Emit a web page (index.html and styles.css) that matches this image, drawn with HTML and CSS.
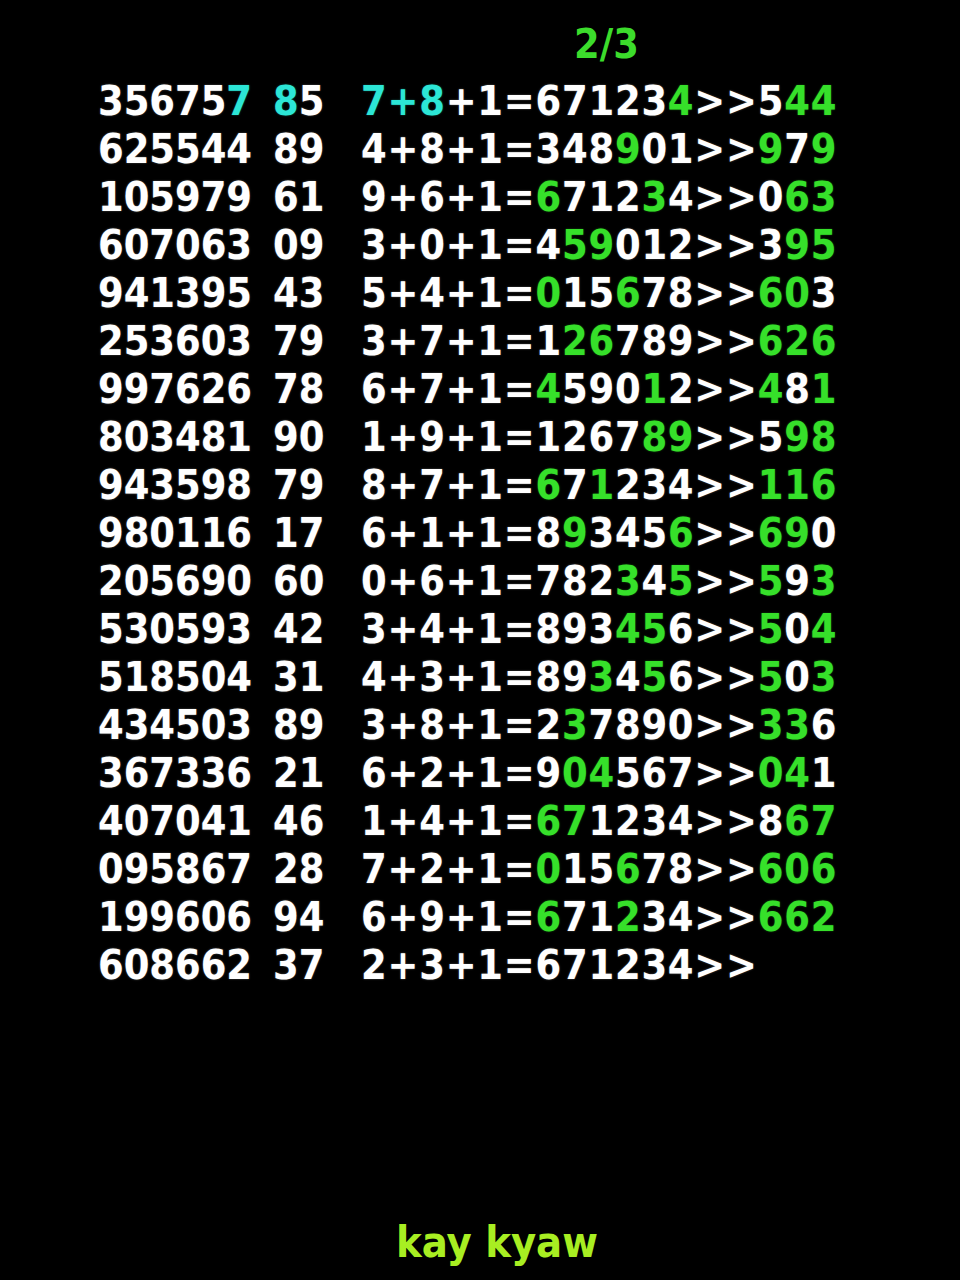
FILE: index.html
```html
<!DOCTYPE html>
<html lang="en">
<head>
    <meta charset="UTF-8">
    <meta name="viewport" content="width=device-width, initial-scale=1.0">
    <title>2/3</title>
    <link rel="stylesheet" href="styles.css">
</head>
<body>
    <div class="sheet">
        <h1 class="title">2/3</h1>

        <div class="rows">
            <div class="row"><span>35675<b class="c">7</b></span><span><b class="c">8</b>5</span><span class="eq"><b class="c">7+8</b>+1=67123<b>4</b>&gt;&gt;5<b>44</b></span></div>
            <div class="row"><span>625544</span><span>89</span><span class="eq">4+8+1=348<b>9</b>01&gt;&gt;<b>9</b>7<b>9</b></span></div>
            <div class="row"><span>105979</span><span>61</span><span class="eq">9+6+1=<b>6</b>712<b>3</b>4&gt;&gt;0<b>63</b></span></div>
            <div class="row"><span>607063</span><span>09</span><span class="eq">3+0+1=4<b>59</b>012&gt;&gt;3<b>95</b></span></div>
            <div class="row"><span>941395</span><span>43</span><span class="eq">5+4+1=<b>0</b>15<b>6</b>78&gt;&gt;<b>60</b>3</span></div>
            <div class="row"><span>253603</span><span>79</span><span class="eq">3+7+1=1<b>26</b>789&gt;&gt;<b>626</b></span></div>
            <div class="row"><span>997626</span><span>78</span><span class="eq">6+7+1=<b>4</b>590<b>1</b>2&gt;&gt;<b>4</b>8<b>1</b></span></div>
            <div class="row"><span>803481</span><span>90</span><span class="eq">1+9+1=1267<b>89</b>&gt;&gt;5<b>98</b></span></div>
            <div class="row"><span>943598</span><span>79</span><span class="eq">8+7+1=<b>6</b>7<b>1</b>234&gt;&gt;<b>116</b></span></div>
            <div class="row"><span>980116</span><span>17</span><span class="eq">6+1+1=8<b>9</b>345<b>6</b>&gt;&gt;<b>69</b>0</span></div>
            <div class="row"><span>205690</span><span>60</span><span class="eq">0+6+1=782<b>3</b>4<b>5</b>&gt;&gt;<b>5</b>9<b>3</b></span></div>
            <div class="row"><span>530593</span><span>42</span><span class="eq">3+4+1=893<b>45</b>6&gt;&gt;<b>5</b>0<b>4</b></span></div>
            <div class="row"><span>518504</span><span>31</span><span class="eq">4+3+1=89<b>3</b>4<b>5</b>6&gt;&gt;<b>5</b>0<b>3</b></span></div>
            <div class="row"><span>434503</span><span>89</span><span class="eq">3+8+1=2<b>3</b>7890&gt;&gt;<b>33</b>6</span></div>
            <div class="row"><span>367336</span><span>21</span><span class="eq">6+2+1=9<b>04</b>567&gt;&gt;<b>04</b>1</span></div>
            <div class="row"><span>407041</span><span>46</span><span class="eq">1+4+1=<b>67</b>1234&gt;&gt;8<b>67</b></span></div>
            <div class="row"><span>095867</span><span>28</span><span class="eq">7+2+1=<b>0</b>15<b>6</b>78&gt;&gt;<b>606</b></span></div>
            <div class="row"><span>199606</span><span>94</span><span class="eq">6+9+1=<b>6</b>71<b>2</b>34&gt;&gt;<b>662</b></span></div>
            <div class="row"><span>608662</span><span>37</span><span class="eq">2+3+1=671234&gt;&gt;</span></div>
        </div>

        <div class="sign">kay kyaw</div>
    </div>
</body>
</html>
```
FILE: styles.css
```css
body {
    margin: 0;
    background-color: #000;
    color: #fff;
    font-family: "DejaVu Sans Condensed", "DejaVu Sans", sans-serif;
    font-weight: bold;
    font-stretch: condensed;
}
.sheet {
    width: 960px;
    height: 1280px;
    padding: 20px 0 0 98px;
    box-sizing: border-box;
    display: flex;
    flex-direction: column;
}
.title {
    margin: 0 0 9px 476px;
    font-size: 41px;
    line-height: 48px;
    font-weight: bold;
    color: #3cdc2c;
}
.rows {
    font-size: 41px;
    line-height: 48px;
    text-shadow: 0 0 2px rgba(255, 255, 255, 0.35);
}
.row {
    display: grid;
    grid-template-columns: 175px 88px auto;
    white-space: nowrap;
}
.row .eq {
    letter-spacing: 0.8px;
}
.row b {
    color: #36e02a;
    text-shadow: 0 0 2px rgba(54, 224, 42, 0.4);
}
.row b.c {
    color: #2ce6d6;
    text-shadow: 0 0 2px rgba(44, 230, 214, 0.4);
}
.sign {
    margin: auto 0 14px 298px;
    font-size: 43px;
    line-height: 48px;
    color: #a8ee22;
}
```
